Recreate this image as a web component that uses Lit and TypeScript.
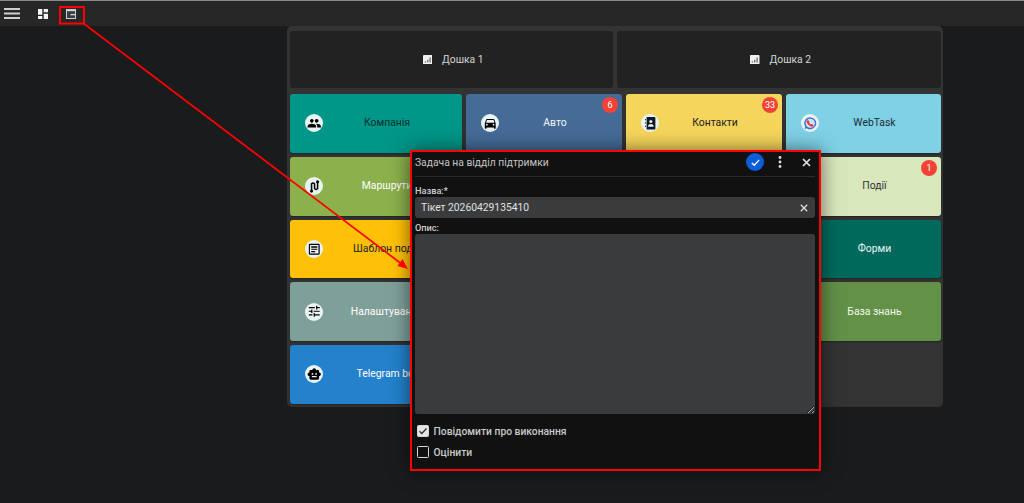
import { LitElement, html, css, svg, nothing } from "lit";
import { customElement } from "lit/decorators.js";

const P: Record<string, any> = {
  people: svg`<path d="M16 11c1.66 0 2.99-1.34 2.99-3S17.66 5 16 5c-1.66 0-3 1.34-3 3s1.34 3 3 3zm-8 0c1.66 0 2.99-1.34 2.99-3S9.66 5 8 5C6.34 5 5 6.34 5 8s1.34 3 3 3zm0 2c-2.33 0-7 1.17-7 3.5V19h14v-2.5c0-2.33-4.67-3.5-7-3.5zm8 0c-.29 0-.62.02-.97.05 1.16.84 1.97 1.97 1.97 3.45V19h6v-2.5c0-2.33-4.67-3.5-7-3.5z"/>`,
  car: svg`<path d="M18.92 6.01C18.72 5.42 18.16 5 17.5 5h-11c-.66 0-1.21.42-1.42 1.01L3 12v8c0 .55.45 1 1 1h1c.55 0 1-.45 1-1v-1h12v1c0 .55.45 1 1 1h1c.55 0 1-.45 1-1v-8l-2.08-5.99zM6.5 16c-.83 0-1.5-.67-1.5-1.5S5.67 13 6.5 13s1.5.67 1.5 1.5S7.33 16 6.5 16zm11 0c-.83 0-1.5-.67-1.5-1.5s.67-1.5 1.5-1.5 1.5.67 1.5 1.5-.67 1.5-1.5 1.5zM5 11l1.5-4.5h11L19 11H5z"/>`,
  contact: svg`<path d="M6 1.500h12.500a2 2 0 0 1 2 2v17a2 2 0 0 1-2 2H6V1.500zM3.500 5H5v2H3.500V5zm0 5.500H5v2H3.500v-2zm0 5.500H5v2H3.500v-2z" fill="#0d1a26"/><circle cx="13" cy="9" r="2.500" fill="#e9f3f3"/><path d="M8.400 16.800c0-2.300 2.300-3.700 4.600-3.700s4.600 1.400 4.600 3.700v.8H8.400z" fill="#e9f3f3"/>`,
  webtask: svg`<path d="M12 2a10 10 0 1 1-5.900 18.100L2.500 22l1.300-4.300A10 10 0 0 1 12 2z" fill="#4a6fd0"/><circle cx="12" cy="12" r="7.500" fill="#cfe6f5"/><path d="M7 7.500c1-1 2.300-.8 2.800.2l.9 1.700c.3.6 0 1.200-.5 1.600 .6 1.300 1.600 2.300 2.900 2.900 .4-.5 1-.8 1.600-.5l1.800.9c1 .5 1.100 1.800.2 2.800-1 1-3.300 .8-5.800-.9-2.600-1.800-4.300-4-4.900-6.200-.3-1 .0-1.900 1-2.500z" fill="#e5393f"/>`,
  route: svg`<path d="M7.500 19V8a3 3 0 0 1 5 0v8a3 3 0 0 0 5 0V6" fill="none" stroke="#000" stroke-width="2.500"/><circle cx="7.500" cy="20" r="2.600"/><circle cx="17.500" cy="4.500" r="2.600"/>`,
  article: svg`<path fill-rule="evenodd" d="M5 3h14a2 2 0 0 1 2 2v14a2 2 0 0 1-2 2H5a2 2 0 0 1-2-2V5a2 2 0 0 1 2-2zm0 2v14h14V5H5zm2 2h10v2.400H7V7zm0 4h10v2H7v-2zm0 4h6.500v2H7v-2z"/>`,
  tune: svg`<path d="M3 17v2h6v-2H3zM3 5v2h10V5H3zm10 16v-2h8v-2h-8v-2h-2v6h2zM7 9v2H3v2h4v2h2V9H7zm14 4v-2H11v2h10zm-6-4h2V7h4V5h-4V3h-2v6z"/>`,
  bot: svg`<path d="M20 9V7c0-1.100-.9-2-2-2h-3c0-1.660-1.340-3-3-3S9 3.340 9 5H6c-1.100 0-2 .9-2 2v2c-1.660 0-3 1.340-3 3s1.340 3 3 3v4c0 1.100.9 2 2 2h12c1.100 0 2-.9 2-2v-4c1.660 0 3-1.340 3-3s-1.340-3-3-3zM7.500 11.500c0-.83.67-1.500 1.500-1.500s1.500.67 1.500 1.500S9.830 13 9 13s-1.500-.67-1.500-1.500zM16 17H8v-2h8v2zm-1-4c-.83 0-1.500-.67-1.500-1.500S14.170 10 15 10s1.500.67 1.500 1.500S15.830 13 15 13z"/>`,
};

type Card = { t?: string; c?: string; fg?: string; i?: string; b?: string };
const cards: Card[] = [
  { t: "Компанія", c: "#009688", fg: "#06302b", i: "people" },
  { t: "Авто", c: "#456b97", fg: "#f2f5f8", i: "car", b: "6" },
  { t: "Контакти", c: "#f6d55c", fg: "#222", i: "contact", b: "33" },
  { t: "WebTask", c: "#7fd1e6", fg: "#1c2c33", i: "webtask" },
  { t: "Маршрути", c: "#8bb04c", fg: "#fff", i: "route" },
  {}, {},
  { t: "Події", c: "#d9e7bc", fg: "#333", b: "1" },
  { t: "Шаблон подій", c: "#ffc107", fg: "#222", i: "article" },
  {}, {},
  { t: "Форми", c: "#00695c", fg: "#e8f6f4" },
  { t: "Налаштування", c: "#7fa099", fg: "#fff", i: "tune" },
  {}, {},
  { t: "База знань", c: "#639148", fg: "#f2f7ee" },
  { t: "Telegram bot", c: "#2481cc", fg: "#fff", i: "bot" },
];

const chart = svg`<svg class="board-ico" viewBox="0 0 10 10"><rect width="10" height="10" rx="1" fill="#f1f1f1"/><path d="M2.500 8V6.500M5 8V5M7.500 8V2.500" stroke="#5a6a78" stroke-width="1.300"/></svg>`;

@customElement("app-root")
export class AppRoot extends LitElement {
  static styles = css`
    :host { display: block; position: relative; height: 503px; overflow: hidden; background: #1a1b1d;
      font-family: Roboto, "Noto Sans", sans-serif; font-size: 10.500px; }
    .top { height: 26px; box-sizing: border-box; background: #272727; border-top: 1px solid #8a8a8a;
      display: flex; align-items: center; padding-left: 4px; }
    .top svg { display: block; }
    .menu { width: 16px; height: 11px; margin-right: 18px; }
    .dash { width: 10px; height: 10px; margin-right: 18px; }
    .win { width: 10px; height: 10px; }
    .panel { box-sizing: border-box; width: 656px; height: 381px; margin-left: 287px; background: #333;
      border-radius: 5px; padding: 5px 2px 3px 3px; }
    .boards { display: grid; grid-template-columns: 323px 324px; gap: 4px; margin-bottom: 6px; }
    .board { height: 57px; box-sizing: border-box; padding-left: 3px; background: #222; border-radius: 3px; display: flex; align-items: center;
      justify-content: center; gap: 10px; color: #d6d6d6; font-size: 10.300px; }
    .board-ico { width: 9.500px; height: 9.500px; }
    .grid { display: grid; grid-template-columns: 172px 156px 156px 155px; grid-auto-rows: 58.750px; gap: 4px; }
    .card { position: relative; border-radius: 3px; display: flex; align-items: center;
      padding: 0 11px 0 15px; box-shadow: 0 1px 2px rgba(0,0,0,.3); }
    .hole { min-width: 0; }
    .circle { flex: none; width: 18px; height: 18px; border-radius: 50%; background: #e9f3f3;
      display: flex; align-items: center; justify-content: center; }
    .circle svg { width: 14.500px; height: 14.500px; display: block; }
    .spacer { flex: none; width: 18px; }
    .label { flex: 1; text-align: center; font-weight: 400; white-space: nowrap; font-size: 10.400px; margin-top: -1px; }
    .badge { position: absolute; top: 3px; right: 4px; width: 16px; height: 16px; border-radius: 50%;
      background: #f44336; color: #fff; font-size: 9px; line-height: 16px; text-align: center; }
    .dialog { position: absolute; left: 410px; top: 150px; width: 411px; height: 321px; box-sizing: border-box;
      border: 2px solid #f00; background: #111; padding: 0 4px 0 3px; color: #d0d0d0;
      box-shadow: 0 0 18px rgba(0,0,0,.55); display: flex; flex-direction: column; }
    .head { height: 25px; box-sizing: border-box; padding: 0 1px 4px 0; flex: none; display: flex; align-items: center; border-bottom: 1px solid #2c2c2c;
      font-size: 10.300px; color: #c4c4c4; }
    .title { flex: 1; }
    .ok { width: 18px; height: 18px; border-radius: 50%; background: #0b5ed7; display: flex;
      align-items: center; justify-content: center; margin-right: 14px; }
    .ok svg { width: 11px; height: 11px; }
    .dots { width: 4px; height: 12px; margin-right: 20px; display: block; }
    .close { width: 9px; height: 9px; margin-right: 3px; display: block; }
    .lab { font-size: 9.200px; line-height: 12px; color: #cfcfcf; font-weight: 500; }
    .lab.first { margin-top: 8px; }
    .lab.second { margin-top: 4px; }
    .input { height: 21px; background: #3a3b3d; border-radius: 3px; display: flex; align-items: center;
      padding: 0 7px 0 6px; flex: none; }
    .input input { flex: 1; min-width: 0; background: none; border: 0; outline: 0; padding: 0; margin: 0;
      color: #e2e2e2; font: 10.300px Roboto, sans-serif; }
    .input svg { width: 8px; height: 8px; display: block; }
    textarea { display: block; box-sizing: border-box; margin: 0; width: 400px; height: 180px;
      background: #3a3b3d; border: 0; outline: 0; border-radius: 3px; flex: none; color: #ddd; }
    .check { display: flex; align-items: center; gap: 4.500px; padding-left: 2px; font-size: 10.300px; font-weight: 500; color: #c9c9c9; height: 12px; }
    .check.a { margin-top: 11px; }
    .check.b { margin-top: 9px; }
    .box { box-sizing: border-box; width: 12px; height: 12px; border-radius: 1.500px; border: 1.500px solid #d8d8d8;
      display: flex; align-items: center; justify-content: center; flex: none; }
    .box.on { background: #e4e4e4; }
    .box svg { width: 10px; height: 10px; display: block; }
    .annot { position: absolute; inset: 0; width: 1024px; height: 503px; pointer-events: none; }
  `;

  render() {
    return html`
      <div class="top">
        <svg class="menu" viewBox="0 0 16 11"><path d="M0 1h16M0 5.500h16M0 10h16" stroke="#cfcfcf" stroke-width="2"/></svg>
        <svg class="dash" viewBox="0 0 10 10"><path d="M0 0h4.300v5.700H0zM5.700 0H10v3.300H5.700zM5.700 4.700H10V10H5.700zM0 7h4.300v3H0z" fill="#f4f4f4"/></svg>
        <svg class="win" viewBox="0 0 10 10"><rect width="10" height="10" fill="#c9d0d4"/><rect x="1" y="2.200" width="8" height="6.800" fill="#3a3d40"/><path d="M4.500 5h4.500v1.300H4.500z" fill="#d8d8d8"/></svg>
      </div>
      <div class="panel">
        <div class="boards">
          <div class="board">${chart}<span>Дошка 1</span></div>
          <div class="board">${chart}<span>Дошка 2</span></div>
        </div>
        <div class="grid">
          ${cards.map((c) =>
            !c.t
              ? html`<div class="hole"></div>`
              : html`<div class="card" style="background:${c.c};color:${c.fg}">
                  ${c.i
                    ? html`<span class="circle"><svg viewBox="0 0 24 24">${P[c.i]}</svg></span>`
                    : html`<span class="spacer"></span>`}
                  <span class="label">${c.t}</span>
                  ${c.b ? html`<span class="badge">${c.b}</span>` : nothing}
                </div>`
          )}
        </div>
      </div>
      <div class="dialog">
        <div class="head">
          <span class="title">Задача на відділ підтримки</span>
          <span class="ok"><svg viewBox="0 0 12 12"><path d="M2 6.500l2.700 2.500L10 3.200" fill="none" stroke="#fff" stroke-width="1.400"/></svg></span>
          <svg class="dots" viewBox="0 0 4 12"><circle cx="2" cy="1.500" r="1.400" fill="#ddd"/><circle cx="2" cy="6" r="1.400" fill="#ddd"/><circle cx="2" cy="10.500" r="1.400" fill="#ddd"/></svg>
          <svg class="close" viewBox="0 0 9 9"><path d="M1 1l7 7M8 1l-7 7" stroke="#e2e2e2" stroke-width="1.700"/></svg>
        </div>
        <div class="lab first">Назва:*</div>
        <div class="input">
          <input .value=${"Тікет 20260429135410"} />
          <svg viewBox="0 0 8 8"><path d="M.8.8l6.400 6.400M7.200.8L.8 7.200" stroke="#ddd" stroke-width="1.300"/></svg>
        </div>
        <div class="lab second">Опис:</div>
        <textarea></textarea>
        <div class="check a">
          <span class="box on"><svg viewBox="0 0 10 10"><path d="M1.500 5.200l2.300 2.300L8.500 2.500" fill="none" stroke="#333" stroke-width="1.300"/></svg></span>
          Повідомити про виконання
        </div>
        <div class="check b"><span class="box"></span>Оцінити</div>
      </div>
      <svg class="annot" viewBox="0 0 1024 503">
        <rect x="60" y="7" width="24" height="16.500" fill="none" stroke="#f00" stroke-width="2"/>
        <path d="M83 23L403 265" stroke="#f00" stroke-width="1.700"/>
        <path d="M408 269l-10.500-3 5-7z" fill="#f00"/>
      </svg>
    `;
  }
}
